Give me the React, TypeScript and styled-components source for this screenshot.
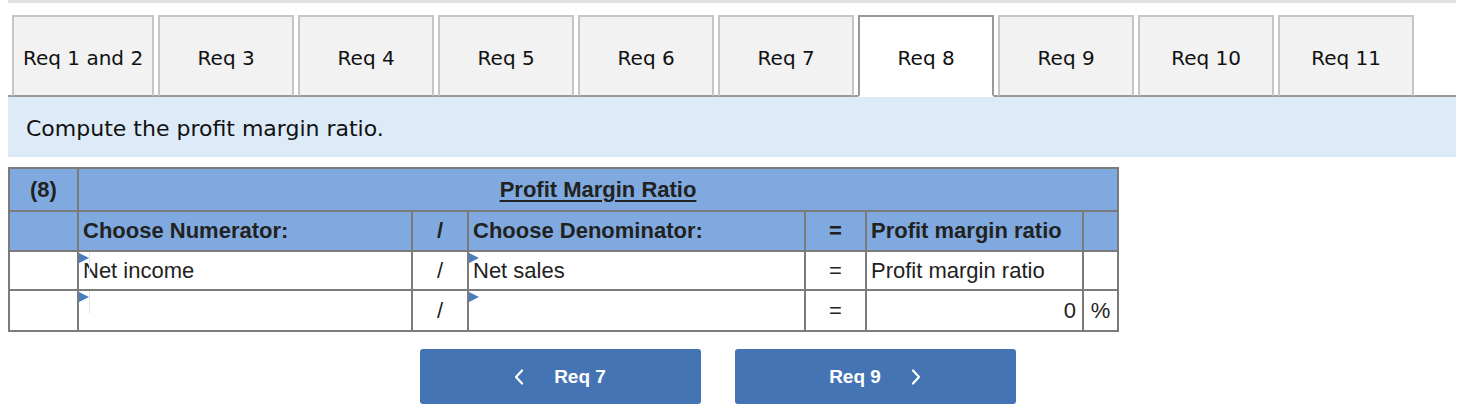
import React from "react";
import styled, { createGlobalStyle } from "styled-components";

const Global = createGlobalStyle`
  html, body { margin: 0; padding: 0; background: #ffffff; }
  body { font-family: "DejaVu Sans", Verdana, sans-serif; }
  * { box-sizing: border-box; }
`;

const Page = styled.div`
  width: 1448px;
  margin-left: 8px;
`;

const TopBar = styled.div`
  height: 3px;
  background: #e0e0e0;
`;

const TabRow = styled.div`
  display: flex;
  align-items: flex-end;
  gap: 4px;
  margin-top: 12px;
  padding-left: 4px;
  position: relative;
  z-index: 1;
  margin-bottom: -2px;
`;

const Tab = styled.div<{ $active?: boolean }>`
  min-width: 136px;
  height: 82px;
  padding: 3px 9px 0;
  display: flex;
  align-items: center;
  justify-content: center;
  font-family: "DejaVu Sans", Verdana, sans-serif;
  font-size: 20px;
  color: #111;
  background: ${(p) => (p.$active ? "#ffffff" : "#f2f2f2")};
  border: 2px solid ${(p) => (p.$active ? "#999999" : "#c6c6c6")};
  border-bottom: ${(p) =>
    p.$active ? "2px solid transparent" : "2px solid #999999"};
  white-space: nowrap;
`;

const Prompt = styled.div`
  height: 62px;
  border-top: 2px solid #999999;
  background: #ddebf8;
  padding-left: 18px;
  padding-top: 2px;
  display: flex;
  align-items: center;
  font-family: "DejaVu Sans", Verdana, sans-serif;
  font-size: 22px;
  color: #111;
`;

const Table = styled.table`
  margin-top: 10px;
  width: 1109px;
  border-collapse: collapse;
  table-layout: fixed;
  font-family: "Liberation Sans", Arial, sans-serif;
  font-size: 22px;
  color: #222;
  border: 2px solid #7b7b7b;
`;

const Row = styled.tr<{ $h: number; $head?: boolean }>`
  height: ${(p) => p.$h}px;
  background: ${(p) => (p.$head ? "#80aadf" : "#ffffff")};
`;

const Cell = styled.td<{
  $align?: "left" | "center" | "right";
  $bold?: boolean;
  $underline?: boolean;
}>`
  border: 2px solid #7b7b7b;
  padding: 0 4px;
  text-align: ${(p) => p.$align || "left"};
  font-weight: ${(p) => (p.$bold ? 700 : 400)};
  text-decoration: ${(p) => (p.$underline ? "underline" : "none")};
  text-underline-offset: 3px;
  vertical-align: middle;
  white-space: nowrap;
  position: relative;
`;

const ValueCell = styled(Cell)`
  padding-right: 6px;
`;

const Marker = styled.span`
  position: absolute;
  left: 0;
  top: 1px;
  width: 0;
  height: 0;
  border-left: 10px solid #4a7cc0;
  border-top: 5px solid transparent;
  border-bottom: 5px solid transparent;
`;

const Caret = styled.span`
  position: absolute;
  left: 10px;
  top: 0;
  width: 1px;
  height: 22px;
  background: #d6e4f5;
`;

const NavRow = styled.div`
  display: flex;
  justify-content: center;
  gap: 34px;
  margin-top: 17px;
  padding-right: 29px;
`;

const NavButton = styled.button`
  width: 281px;
  height: 55px;
  border: none;
  border-radius: 3px;
  background: #4574b4;
  color: #ffffff;
  display: flex;
  align-items: center;
  justify-content: center;
  gap: 30px;
  font-family: "Liberation Sans", Arial, sans-serif;
  font-weight: 700;
  font-size: 19px;
  cursor: pointer;
  padding: 0;
`;

const Chevron = ({ dir }: { dir: "left" | "right" }) => (
  <svg width="10" height="16" viewBox="0 0 10 16" fill="none">
    <polyline
      points={dir === "left" ? "8,1.5 2,8 8,14.5" : "2,1.5 8,8 2,14.5"}
      stroke="#ffffff"
      strokeWidth="2.2"
      strokeLinecap="round"
      strokeLinejoin="round"
    />
  </svg>
);

const tabs = [
  "Req 1 and 2",
  "Req 3",
  "Req 4",
  "Req 5",
  "Req 6",
  "Req 7",
  "Req 8",
  "Req 9",
  "Req 10",
  "Req 11",
];

const cols = [69, 334, 56, 337, 61, 217, 35];

export default function App() {
  return (
    <>
      <Global />
      <Page>
        <TopBar />
        <TabRow>
          {tabs.map((t) => (
            <Tab key={t} $active={t === "Req 8"}>
              {t}
            </Tab>
          ))}
        </TabRow>
        <Prompt>Compute the profit margin ratio.</Prompt>
        <Table>
          <colgroup>
            {cols.map((w, i) => (
              <col key={i} style={{ width: w }} />
            ))}
          </colgroup>
          <tbody>
            <Row $h={43} $head>
              <Cell $align="center" $bold>
                (8)
              </Cell>
              <Cell colSpan={6} $align="center" $bold $underline>
                Profit Margin Ratio
              </Cell>
            </Row>
            <Row $h={40} $head>
              <Cell />
              <Cell $bold>Choose Numerator:</Cell>
              <Cell $align="center" $bold>
                /
              </Cell>
              <Cell $bold>Choose Denominator:</Cell>
              <Cell $align="center" $bold>
                =
              </Cell>
              <Cell $bold>Profit margin ratio</Cell>
              <Cell />
            </Row>
            <Row $h={39}>
              <Cell />
              <Cell>
                <Marker />
                <Caret />
                Net income
              </Cell>
              <Cell $align="center">/</Cell>
              <Cell>
                <Marker />
                Net sales
              </Cell>
              <Cell $align="center">=</Cell>
              <Cell>Profit margin ratio</Cell>
              <Cell />
            </Row>
            <Row $h={41}>
              <Cell />
              <Cell>
                <Marker />
                <Caret />
              </Cell>
              <Cell $align="center">/</Cell>
              <Cell>
                <Marker />
              </Cell>
              <Cell $align="center">=</Cell>
              <ValueCell $align="right">0</ValueCell>
              <Cell $align="center">%</Cell>
            </Row>
          </tbody>
        </Table>
        <NavRow>
          <NavButton>
            <Chevron dir="left" />
            <span>Req 7</span>
          </NavButton>
          <NavButton>
            <span>Req 9</span>
            <Chevron dir="right" />
          </NavButton>
        </NavRow>
      </Page>
    </>
  );
}
